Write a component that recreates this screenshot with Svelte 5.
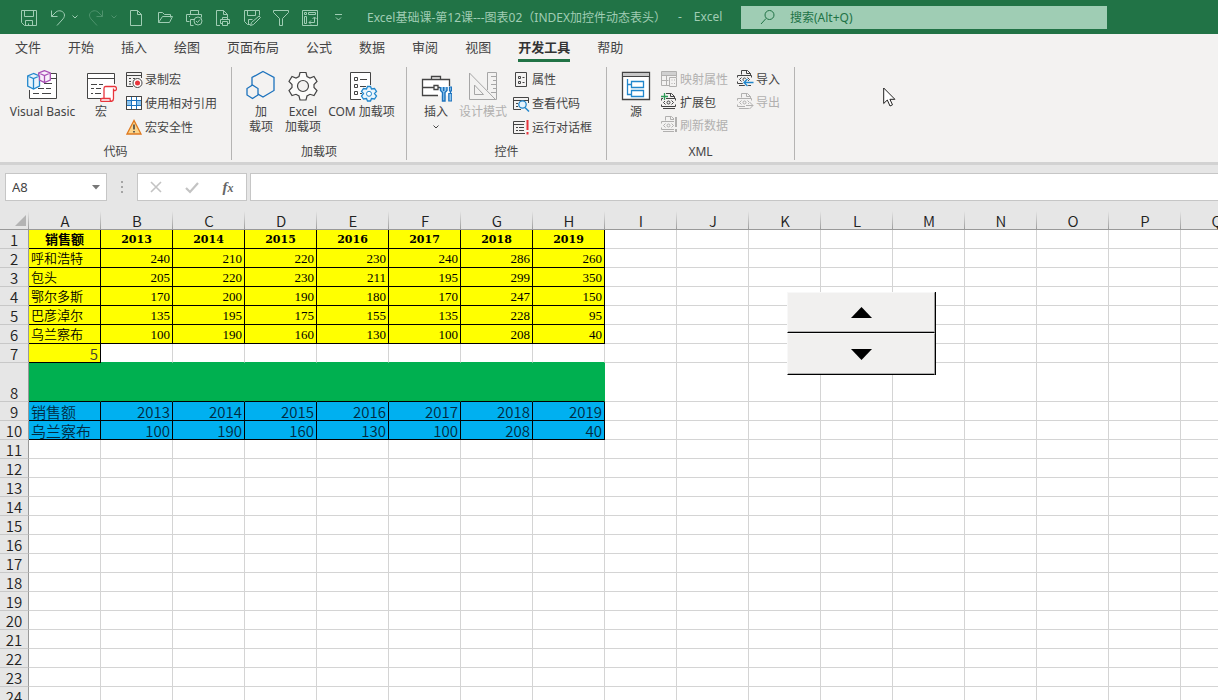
<script lang="ts">
	const tabs = ['文件', '开始', '插入', '绘图', '页面布局', '公式', '数据', '审阅', '视图', '开发工具', '帮助'];
	let activeTab = $state('开发工具');

	const quickActions = [
		{ icon: 'new', label: '新建' },
		{ icon: 'open', label: '打开' },
		{ icon: 'print', label: '快速打印' },
		{ icon: 'preview', label: '打印预览' },
		{ icon: 'saveas', label: '另存为' },
		{ icon: 'filter', label: '筛选' },
		{ icon: 'pivot', label: '数据透视表' },
		{ icon: 'more', label: '自定义快速访问工具栏' }
	];

	const groups = [
		{
			name: '代码',
			big: [
				{ icon: 'vb', lines: ['Visual Basic'], size: 'wide' },
				{ icon: 'macro', lines: ['宏'], size: 'narrow' }
			],
			lists: [
				[
					{ icon: 'record', label: '录制宏' },
					{ icon: 'relative', label: '使用相对引用' },
					{ icon: 'warning', label: '宏安全性' }
				]
			]
		},
		{
			name: '加载项',
			big: [
				{ icon: 'addins', lines: ['加', '载项'], size: 'narrow' },
				{ icon: 'gear', lines: ['Excel', '加载项'], size: 'narrow' },
				{ icon: 'com', lines: ['COM 加载项'], size: 'wide' }
			],
			lists: []
		},
		{
			name: '控件',
			big: [
				{ icon: 'toolbox', lines: ['插入'], size: 'narrow', menu: true },
				{ icon: 'design', lines: ['设计模式'], size: 'medium', disabled: true }
			],
			lists: [
				[
					{ icon: 'props', label: '属性' },
					{ icon: 'viewcode', label: '查看代码' },
					{ icon: 'dialog', label: '运行对话框' }
				]
			]
		},
		{
			name: 'XML',
			tight: true,
			big: [{ icon: 'source', lines: ['源'], size: 'narrow' }],
			lists: [
				[
					{ icon: 'map', label: '映射属性', disabled: true },
					{ icon: 'expand', label: '扩展包' },
					{ icon: 'refresh', label: '刷新数据', disabled: true }
				],
				[
					{ icon: 'import', label: '导入' },
					{ icon: 'export', label: '导出', disabled: true }
				]
			]
		}
	] as any[];

	// only as many columns and rows as the window has room for
	const colWidth = 72;
	const rowHeight = 19;
	let innerWidth = $state(0);
	let innerHeight = $state(0);
	const columns = $derived(
		'ABCDEFGHIJKLMNOPQRSTUVWXYZ'.split('').slice(0, Math.max(8, Math.ceil((innerWidth - 29) / colWidth)))
	);
	const rows = $derived(
		Array.from({ length: Math.max(10, Math.ceil((innerHeight - 250) / rowHeight)) }, (_, i) => i + 1)
	);

	const years = [2013, 2014, 2015, 2016, 2017, 2018, 2019];
	const sales = [
		['呼和浩特', 240, 210, 220, 230, 240, 286, 260],
		['包头', 205, 220, 230, 211, 195, 299, 350],
		['鄂尔多斯', 170, 200, 190, 180, 170, 247, 150],
		['巴彦淖尔', 135, 195, 175, 155, 135, 228, 95],
		['乌兰察布', 100, 190, 160, 130, 100, 208, 40]
	];

	let index = $state(5);
	let cellName = $state('A8');
	let formula = $state('');

	function cellValue(row: number, col: number) {
		if (col > 7) return '';
		if (row === 1 || row === 9) return col === 0 ? '销售额' : years[col - 1];
		if (row >= 2 && row <= 6) return sales[row - 2][col];
		if (row === 7 && col === 0) return index;
		if (row === 10) return sales[index - 1][col];
		return '';
	}

	function cellClass(row: number, col: number) {
		if (col > 7) return '';
		let name = '';
		if (row === 1) name = col === 0 ? 'yellow head' : 'yellow head year';
		else if (row <= 6) name = 'yellow';
		else if (row === 7) name = col === 0 ? 'yellow index' : 'above';
		else if (row === 8) name = 'green';
		else if (row <= 10) name = 'blue';
		if (typeof cellValue(row, col) === 'number') name += ' num';
		return name;
	}

	function step(delta: number) {
		index = Math.min(5, Math.max(1, index + delta));
	}
</script>

<svelte:window bind:innerWidth bind:innerHeight />

<svelte:head>
	<title>Excel</title>
</svelte:head>

{#snippet quick(name: string)}
	<svg class="quick-icon" viewBox="0 0 17 18" aria-hidden="true">
		{#if name === 'save'}
			<path d="M.5 2.5h15v15h-12l-3-3zM3.5 2.5v6h9v-6M4.5 17.5v-5h7v5M7.5 17.5v-2" />
		{:else if name === 'undo'}
			<path d="M2.5 2.5v6h6M2.5 8.5L7 4c3-2.5 8-1 8.500 3 0 2-1 3.500-2.500 5l-5 5.500" />
		{:else if name === 'redo'}
			<path d="M14.500 2.500v6h-6M14.500 8.500L10 4c-3-2.500-8-1-8.500 3 0 2 1 3.500 2.500 5l5 5.500" />
		{:else if name === 'new'}
			<path d="M2.500 2.500h7l4 4v11h-11zM9.500 2.500v4h4" />
		{:else if name === 'open'}
			<path d="M1.500 14.500v-10h4l2 2h6v3M1.500 14.500h11l3-6h-10l-4 6" />
		{:else if name === 'print'}
			<path d="M4.500 6.500v-4h8v4M3.500 13.500h-3v-7h15v3M4.500 17.500v-6h4M4.500 17.500h3M3 8.500h1" />
			<circle cx="12" cy="13" r="4" />
			<path d="M10 13l1.500 1.500L14 11.500" />
		{:else if name === 'preview'}
			<path d="M5 17.500H1.500v-15h7l4 4v3M8.500 2.500v4h4M7.500 11.500v-2h5v2M7 15.500H5.500v-4h9v4H13M7.500 13.500h5v4h-5z" />
		{:else if name === 'saveas'}
			<path d="M6 16.500H3.500l-3-3v-11h15v5M3.500 2.500v5h8v-5M4.500 16.500v-5h4M15 8l1.500 1.500-7 7-3 1 1-3z" />
		{:else if name === 'filter'}
			<path d="M.5 2.500h15v2l-6 6v7h-3v-7l-6-6z" />
		{:else if name === 'pivot'}
			<path d="M.5 2.500h15v15H.5zM2.500 4.500h2v2h-2zM6.500 4.500h7v2h-7zM2.500 8.500h2v7h-2zM7 14.500h5.500v-5M9 12.500l-2 2 2 2M10.500 11l2-2 2 2" />
		{:else if name === 'more'}
			<path d="M4 6.500h7M5 9.500l2.500 2.500 2.500-2.500" />
		{/if}
	</svg>
{/snippet}

{#snippet bigIcon(name: string)}
	<svg class="big-icon" viewBox="0 0 32 32" aria-hidden="true">
		{#if name === 'vb'}
			<path d="M3 4h26v24H3z" fill="#fff" stroke="none" />
			<path d="M2.500 20v8.500h27v-25H24M24 8.500h5M6 18.500h2M11 18.500h6M19 18.500h5M6 23.500h6M15 23.500h9M17 13.500h8" />
			<g stroke="#2287cc" stroke-width="1.300" fill="#e9f4fb">
				<path d="M6.500 3.500L.7 6v10l5.800 3 6-3V6zM.7 6l5.800 2.500L12.500 6M6.500 8.500V19" />
			</g>
			<g stroke="#a94fb5" stroke-width="1.300" fill="#f8effa">
				<path d="M17.500.7L11.700 3v2.500l.8.5v4l5 2.500 5.800-2.500V3zM11.700 3l5.800 2.500L23.300 3M17.500 5.500v7" />
			</g>
		{:else if name === 'macro'}
			<path d="M2.500 3.500h27v25h-27z" fill="#fff" stroke="none" />
			<path d="M16 28.500H2.500v-25h27V14M2.500 8.500h27M6 14.500h6M14 14.500h4M6 18.500h3M11 18.500h5M6 23.500h2M10 23.500h6" />
			<path d="M20.500 16.500h9c2.500 0 2.500 4 .5 4h-1.500v8c0 2-1 3-3 3h-9c-1 0-1.500-3 .5-3h2V18.500c0-1.500.5-2 1.500-2zM28.500 20.500v-2M17 28.500h8c0 2 .5 3 1.500 3" stroke="#e8353c" fill="#fff" stroke-width="1.300" />
		{:else if name === 'addins'}
			<path d="M18 1.500l11 6v13l-11 6.500L7 20.500v-13z" stroke="#1c72bd" stroke-width="1.300" />
			<path d="M7.500 15l5.500 3.500v6.500l-5.500 3.500-5.500-3.500v-6.500z" stroke="#1c72bd" stroke-width="1.300" fill="#f3f2f1" />
		{:else if name === 'gear'}
			<path d="M13 2.500h6l1 4 3 1.500 4-1.500 3 5-3 3v3l3 3-3 5-4-1.200-3 1.700-1 4h-6l-1-4-3-1.700-4 1.200-3-5 3-3v-3l-3-3 3-5 4 1.500 3-1.500z" fill="#fbfbfa" stroke-width="1.200" />
			<circle cx="16" cy="16" r="5.500" fill="#f3f2f1" stroke-width="1.200" />
		{:else if name === 'com'}
			<path d="M4.500 2.500h20v27h-20z" fill="#fff" stroke="none" />
			<path d="M15 29.500H4.500v-27h20V15M8.500 7.500h3v3h-3zM8.500 14.500h3v3h-3zM8.500 21.500h3v3h-3zM14 9.500h7M14 16.500h6M14 23.500h2" />
			<path d="M21.500 16.500h3l1 2.500 3-.5 2 3-2 2 2 2.500-2 3-3-.5-1 2.500h-3l-1-2.500-3 .5-2-3 2-2.500-2-2 2-3 3 .5z" stroke="#2287cc" fill="#eaf5fc" stroke-width="1.300" />
			<circle cx="23" cy="23.800" r="2.500" stroke="#2287cc" fill="#fff" />
		{:else if name === 'toolbox'}
			<path d="M2.500 9.500h27v16h-27z" fill="#fff" stroke="none" />
			<path d="M18 25.500H2.500v-16h27V16M11.500 9.500v-3h9v3M2.500 17.500h11M18 17.500h2M14 15.500h4v4h-4z" stroke-width="1.300" />
			<path d="M20.500 17v3.500l2 2V31h2.500v-8.500l2-2V17M23.700 17v4" stroke="#1c72bd" stroke-width="1.400" fill="#90c5ed" />
			<path d="M29.500 17h2v4h-2zM28.800 23.500h3V31h-3zM30.500 21v2.500" stroke="#1c72bd" stroke-width="1.200" fill="#90c5ed" />
		{:else if name === 'design'}
			<g stroke="#a6a6a6">
				<path d="M2.500 3v26.500h26zM7.500 15v9.500h9z" />
				<path d="M20.500 20V2.500h9v27h-9M24 6.500h5M26 10.500h3M24 14.500h5M26 18.500h3M24 22.500h5" />
			</g>
		{:else if name === 'source'}
			<path d="M2.500 2.500h27v27h-27z" fill="#fff" stroke-width="1.300" />
			<path d="M3 3h26v4H3z" fill="#c8c8c8" stroke="none" />
			<path d="M2.500 6.500h27" />
			<path d="M7.500 9v15.500h4M7.500 14.500h4M11.500 11.500h12v6h-12zM11.500 20.500h12v6h-12z" stroke="#2287cc" stroke-width="1.300" />
		{/if}
	</svg>
{/snippet}

{#snippet xmlPage()}
	<path d="M4.500 4.500v-4h6l3 3v2M9.500.5v3h4M.5 7.500v-2h14v2M.5 11.500v2h14v-2M2 15.500h12M4.500 7.500l-2 2 2 2M10.500 7.500l2 2-2 2" />
	<circle cx="7.500" cy="9.500" r="1.500" />
{/snippet}

{#snippet smallIcon(name: string)}
	<svg class="small-icon" viewBox="0 0 17 17" aria-hidden="true">
		{#if name === 'record'}
			<path d="M7 15.500H.5v-14h15V7M.5 4.500h15M3 7.500h2M7 7.500h2M3 10.500h2M3 13h2" />
			<circle cx="11.500" cy="12" r="4.500" fill="#fff" />
			<circle cx="11.500" cy="12" r="2.500" fill="#e8353c" stroke="none" />
		{:else if name === 'relative'}
			<path d="M.5 1.500h15v13H.5z" fill="#fff" />
			<path d="M1 5.500h14v5H1z" fill="#8cc4ef" stroke="none" />
			<path d="M6 6h4v4H6z" fill="#fff" stroke="none" />
			<path d="M.5 5.500h15M.5 10.500h15M5.500 1.500v13M10.500 1.500v13" stroke="#1c72bd" />
			<path d="M.5 1.500h15v13H.5z" />
		{:else if name === 'warning'}
			<path d="M8 1.500L1 15h14z" fill="#fbd48b" stroke="#e07a1f" stroke-width="1.300" />
			<path d="M8 5.500v5M8 12v1.500" stroke-width="1.600" />
		{:else if name === 'props'}
			<path d="M2.500 1.500h11v14h-11zM5.500 5.500h2v2h-2zM5.500 10.500h2v2h-2z" />
			<path d="M9.500 6.500h2M9.500 11.500h2" />
		{:else if name === 'viewcode'}
			<path d="M8 14.500H.5v-12h15V8M.5 5.500h15M3 8.500h2M3 11.500h2" />
			<circle cx="9.500" cy="9.500" r="3.700" fill="#e4f2fc" stroke="#2287cc" stroke-width="1.300" />
			<path d="M12 12.500l4 4" stroke="#2287cc" stroke-width="1.500" />
		{:else if name === 'dialog'}
			<path d="M12 14.500H.5v-12H12M.5 5.500H11M3 8.500h2M6 8.500h5M3 11.500h2M6 11.500h5" />
			<path d="M14.500 1v10M14.500 13v2.500" stroke="#e8353c" stroke-width="2" />
		{:else if name === 'map'}
			<path d="M8 15.500H.5v-14h15V7M.5 5.500h15M5.500 2v13M10.500 2v4M.5 10.500h7" />
			<path d="M1 2h14v3H1z" fill="#d0d0d0" stroke="none" />
			<path d="M8.500 7.500h7v9h-7zM10.500 10h1M13 10h1M10.500 13.500h1M13 13.500h1" />
		{:else if name === 'expand'}
			{@render xmlPage()}
			<path d="M0 3.500h8M3.500 0v8" stroke="#f3f2f1" stroke-width="3" />
			<path d="M0 3.500h7M3.500 0v7" stroke="#2e9b57" stroke-width="1.300" />
		{:else if name === 'refresh'}
			{@render xmlPage()}
			<path d="M15 0v17" stroke="#f3f2f1" stroke-width="4" />
			<path d="M15 1v10M15 13v3" stroke-width="2" />
		{:else if name === 'import'}
			{@render xmlPage()}
			<path d="M16.500 12.500H7M10.500 9l-3.500 3.500 3.500 3.500" stroke="#f3f2f1" stroke-width="3" />
			<path d="M16.500 12.500H7M10.500 9l-3.500 3.500 3.500 3.500" stroke="#2287cc" stroke-width="1.300" />
		{:else if name === 'export'}
			{@render xmlPage()}
			<path d="M8 12.500h8M12.500 9l3.500 3.500-3.500 3.500" stroke="#f3f2f1" stroke-width="3" />
			<path d="M9 12.500h7M12.500 9l3.500 3.500-3.500 3.500" />
		{/if}
	</svg>
{/snippet}

<div class="window">
	<header class="titlebar">
		<div class="quickbar">
			<button class="quick" aria-label="保存">{@render quick('save')}</button>
			<button class="quick undo" aria-label="撤消">{@render quick('undo')}</button>
			<button class="drop" aria-label="撤消列表">
				<svg viewBox="0 0 8 6" aria-hidden="true"><path d="M1.500 1.500L4 4l2.500-2.500" /></svg>
			</button>
			<button class="quick undo dim" aria-label="恢复">{@render quick('redo')}</button>
			<button class="drop dim" aria-label="恢复列表">
				<svg viewBox="0 0 8 6" aria-hidden="true"><path d="M1.500 1.500L4 4l2.500-2.500" /></svg>
			</button>
			{#each quickActions as action (action.icon)}
				<button class="quick" aria-label={action.label}>{@render quick(action.icon)}</button>
			{/each}
		</div>
		<div class="title">
			<span>Excel基础课-第12课---图表02（INDEX加控件动态表头）</span>
			<span>-</span>
			<span>Excel</span>
		</div>
		<label class="search">
			<svg viewBox="0 0 16 16" aria-hidden="true">
				<circle cx="9.500" cy="6" r="4.500" />
				<path d="M6 9.500L1 15" />
			</svg>
			<input type="text" placeholder="搜索(Alt+Q)" aria-label="搜索" />
		</label>
	</header>

	<div class="tabs" role="tablist">
		{#each tabs as tab (tab)}
			<button
				role="tab"
				class="tab"
				class:active={tab === activeTab}
				aria-selected={tab === activeTab}
				onclick={() => (activeTab = tab)}>{tab}</button
			>
		{/each}
	</div>

	<div class="ribbon">
		{#each groups as group (group.name)}
			<section class="group">
				<div class="tools">
					{#each group.big as item (item.icon)}
						<button class="big {item.size}" disabled={item.disabled}>
							{@render bigIcon(item.icon)}
							{#each item.lines as line (line)}
								<span>{line}</span>
							{/each}
							{#if item.menu}
								<svg class="caret" viewBox="0 0 8 6" aria-hidden="true"><path d="M1.500 1.500L4 4l2.500-2.500" /></svg>
							{/if}
						</button>
					{/each}
					{#each group.lists as list, i (i)}
						<div class="list" class:tight={group.tight}>
							{#each list as item (item.icon)}
								<button class="small" disabled={item.disabled}>
									{@render smallIcon(item.icon)}
									<span>{item.label}</span>
								</button>
							{/each}
						</div>
					{/each}
				</div>
				<div class="group-name">{group.name}</div>
			</section>
		{/each}
	</div>

	<div class="formula-bar">
		<div class="name-box">
			<input type="text" aria-label="名称框" bind:value={cellName} />
			<button aria-label="名称列表">
				<svg viewBox="0 0 8 5" aria-hidden="true"><path d="M0 0h8L4 4.500z" /></svg>
			</button>
		</div>
		<div class="grip"><i></i><i></i><i></i></div>
		<div class="entry">
			<button aria-label="取消">
				<svg viewBox="0 0 14 14" aria-hidden="true"><path d="M2 2l10 10M12 2L2 12" stroke-width="1.600" /></svg>
			</button>
			<button aria-label="输入">
				<svg viewBox="0 0 14 14" aria-hidden="true"><path d="M1 8l4 4 8-9" stroke-width="2.200" /></svg>
			</button>
			<button class="fx" aria-label="插入函数"><em>f</em><em class="x">x</em></button>
		</div>
		<input class="formula" type="text" aria-label="编辑栏" bind:value={formula} />
	</div>

	<div class="sheet">
		<table style:width="{29 + columns.length * colWidth}px">
			<colgroup>
				<col class="row-col" />
				{#each columns as column (column)}
					<col />
				{/each}
			</colgroup>
			<thead>
				<tr>
					<th class="corner">
						<svg viewBox="0 0 11 11" aria-hidden="true"><path d="M11 0v11H0z" /></svg>
					</th>
					{#each columns as column (column)}
						<th scope="col">{column}</th>
					{/each}
				</tr>
			</thead>
			<tbody>
				{#each rows as row (row)}
					<tr class:tall={row === 8}>
						<th scope="row">{row}</th>
						{#each columns as column, col (column)}
							<td class={cellClass(row, col)}>{cellValue(row, col)}</td>
						{/each}
					</tr>
				{/each}
			</tbody>
		</table>

		<div class="spinner">
			<button aria-label="增加" onclick={() => step(1)}>
				<svg viewBox="0 0 21 11" aria-hidden="true"><path d="M10.500 0L21 11H0z" /></svg>
			</button>
			<button aria-label="减少" onclick={() => step(-1)}>
				<svg viewBox="0 0 21 11" aria-hidden="true"><path d="M10.500 11L21 0H0z" /></svg>
			</button>
		</div>
	</div>

	<svg class="pointer" viewBox="0 0 13 20" aria-hidden="true">
		<path d="M.7 1v15.500l3.600-3.500 2.700 6 2.500-1.200-2.600-5.500h5z" />
	</svg>
</div>

<style>
	:global(body) {
		margin: 0;
		overflow: hidden;
	}

	* {
		box-sizing: border-box;
	}

	.window {
		position: relative;
		display: flex;
		flex-direction: column;
		height: 100vh;
		overflow: hidden;
		background: #e6e6e6;
		color: #444;
		font-family: 'Noto Sans', 'Noto Sans CJK SC', sans-serif;
		font-size: 12px;
	}

	button,
	input {
		margin: 0;
		padding: 0;
		border: 0;
		background: none;
		color: inherit;
		font: inherit;
	}

	svg {
		display: block;
		flex: none;
		fill: none;
		stroke: currentColor;
	}

	/* title bar */
	.titlebar {
		display: flex;
		align-items: center;
		flex: none;
		height: 34px;
		padding-left: 15px;
		background: #217346;
		color: #a0cdb4;
	}

	.quickbar {
		display: flex;
		align-items: center;
		flex: none;
	}

	.quick {
		display: flex;
		justify-content: center;
		width: 29px;
	}

	.quick.undo {
		width: 27px;
	}

	.quick-icon {
		width: 17px;
		height: 18px;
	}

	.drop {
		width: 8px;
		margin-right: 4px;
	}

	.drop svg {
		width: 8px;
		height: 6px;
	}

	.dim {
		opacity: 0.35;
	}

	.title {
		display: flex;
		flex: none;
		gap: 12px;
		width: 387px;
		padding-left: 13px;
		white-space: nowrap;
	}

	.search {
		display: flex;
		align-items: center;
		flex: 0 1 366px;
		height: 23px;
		padding-left: 19px;
		gap: 14px;
		background: #9fcdb4;
		color: #217346;
	}

	.search svg {
		width: 16px;
		height: 16px;
	}

	.search input {
		flex: 1;
		min-width: 0;
		outline: none;
	}

	.search input::placeholder {
		color: #217346;
		opacity: 1;
	}

	/* ribbon */
	.tabs {
		display: flex;
		flex: none;
		gap: 27px;
		height: 28px;
		padding-left: 15px;
		background: #f3f2f1;
		font-size: 13px;
	}

	.tab {
		padding-top: 2px;
		border-bottom: 3px solid transparent;
		line-height: 23px;
		white-space: nowrap;
	}

	.tab.active {
		border-bottom-color: #217346;
		color: #333;
		font-weight: bold;
	}

	.ribbon {
		display: flex;
		flex: none;
		padding: 5px 0 2px;
		border-bottom: 3px solid #d2d2d2;
		background: #f3f2f1;
	}

	.group {
		display: flex;
		flex-direction: column;
		border-right: 1px solid #b5b4b3;
	}

	.tools {
		display: flex;
		height: 77px;
		padding: 0 14px 0 5px;
	}

	.group:nth-child(2) .tools {
		padding: 0 7px 0 8px;
	}

	.group:nth-child(n + 3) .tools {
		padding-left: 8px;
	}

	.big {
		display: flex;
		flex-direction: column;
		align-items: center;
		padding-top: 3px;
		line-height: 15px;
		white-space: nowrap;
	}

	.wide {
		width: 75px;
	}

	.medium {
		width: 52px;
	}

	.narrow {
		width: 42px;
	}

	.big-icon {
		width: 32px;
		height: 32px;
		margin-bottom: 2px;
	}

	.caret {
		width: 8px;
		height: 6px;
		margin-top: 5px;
	}

	.list {
		display: flex;
		flex-direction: column;
		padding-left: 4px;
	}

	.list + .list {
		padding-left: 9px;
	}

	.small {
		display: flex;
		align-items: center;
		gap: 2px;
		height: 24px;
		white-space: nowrap;
	}

	.tight .small {
		height: 23px;
	}

	.small-icon {
		width: 17px;
		height: 17px;
	}

	button:disabled {
		color: #b1b0af;
	}

	.group-name {
		line-height: 16px;
		text-align: center;
	}

	/* formula bar */
	.formula-bar {
		display: flex;
		flex: none;
		height: 36px;
		padding: 8px 0 0 5px;
	}

	.name-box,
	.entry,
	.formula {
		border: 1px solid #c6c6c6;
		background: #fff;
	}

	.formula {
		border-right: 0;
	}

	.name-box {
		display: flex;
		width: 102px;
	}

	.name-box input {
		flex: 1;
		min-width: 0;
		padding-left: 6px;
		font-size: 13px;
	}

	.name-box button {
		width: 20px;
	}

	.name-box svg {
		width: 8px;
		height: 5px;
		margin: 0 auto;
		fill: #777;
		stroke: none;
	}

	.grip {
		display: flex;
		flex-direction: column;
		align-items: center;
		justify-content: center;
		gap: 3px;
		width: 30px;
	}

	.grip i {
		width: 2px;
		height: 2px;
		background: #a5a5a5;
	}

	.entry {
		display: flex;
		width: 110px;
		margin-right: 3px;
	}

	.entry button {
		flex: 1;
		color: #c3c3c3;
	}

	.entry svg {
		width: 14px;
		height: 14px;
		margin: 0 auto;
	}

	.entry .fx {
		color: #666;
		font-family: 'Liberation Serif', serif;
		font-size: 15px;
		font-weight: bold;
		line-height: 16px;
	}

	.fx .x {
		font-size: 12px;
	}

	.formula {
		flex: 1;
		min-width: 0;
		padding: 0 6px;
	}

	/* sheet */
	.sheet {
		position: relative;
		flex: 1;
		min-height: 0;
		overflow: hidden;
		background: #fff;
	}

	table {
		border-collapse: separate;
		border-spacing: 0;
		table-layout: fixed;
		color: #000;
		font-family: 'Noto Sans CJK SC', sans-serif;
		font-size: 15px;
		font-weight: 350;
		line-height: 15px;
	}

	.row-col {
		width: 29px;
	}

	th,
	td {
		height: 19px;
		padding: 0 0 1px;
		white-space: nowrap;
		vertical-align: bottom;
	}

	th {
		background: #e6e6e6;
		color: #222;
		font-weight: 350;
	}

	thead th {
		height: 29px;
		border-bottom: 1px solid #999;
		background: linear-gradient(#e6e6e6 10px, #9e9e9e) right / 1px 100% no-repeat #e6e6e6;
	}

	.corner svg {
		width: 11px;
		height: 11px;
		margin: 0 3px 2px auto;
		fill: #b4b4b4;
		stroke: none;
	}

	tbody th {
		border-right: 1px solid #999;
		border-bottom: 1px solid #c8c8c8;
	}

	td {
		padding: 0 2px 1px;
		border-right: 1px solid #d4d4d4;
		border-bottom: 1px solid #d4d4d4;
	}

	.tall th {
		height: 39px;
	}

	.num {
		text-align: right;
	}

	.yellow {
		padding-bottom: 0;
		border-color: #000;
		background: #ff0;
		font-family: 'Liberation Serif', 'Noto Sans CJK SC', serif;
		font-size: 13px;
		vertical-align: middle;
	}

	.head {
		font-weight: bold;
		text-align: center;
	}

	.year {
		font-family: 'DejaVu Serif', serif;
		font-size: 11px;
	}

	.index {
		padding-bottom: 1px;
		color: #443;
		font-family: 'Noto Sans CJK SC', sans-serif;
		font-size: 15px;
		vertical-align: bottom;
	}

	.above {
		border-bottom-color: #00b050;
	}

	.green {
		border-color: #00b050;
		border-bottom-color: #000;
		background: #00b050;
	}

	.blue {
		border-color: #000;
		background: #00b0f0;
		color: #022a40;
	}

	/* the form control lies on top of the cells */
	.spinner {
		position: absolute;
		top: 91px;
		left: 787px;
		display: grid;
		grid-template-rows: 41px 42px;
		width: 149px;
		border-right: 1px solid #000;
	}

	.spinner button {
		display: flex;
		align-items: center;
		justify-content: center;
		border: 1px solid #f8f8f8;
		border-right-color: #a0a0a0;
		border-bottom-color: #000;
		background: #f1f0ef;
		box-shadow: inset 0 -1px #b0b0b0;
	}

	.spinner svg {
		width: 21px;
		height: 11px;
		fill: #000;
		stroke: none;
	}

	.pointer {
		position: absolute;
		top: 87px;
		left: 883px;
		width: 13px;
		height: 20px;
		fill: #fff;
		stroke: #222;
	}
</style>
